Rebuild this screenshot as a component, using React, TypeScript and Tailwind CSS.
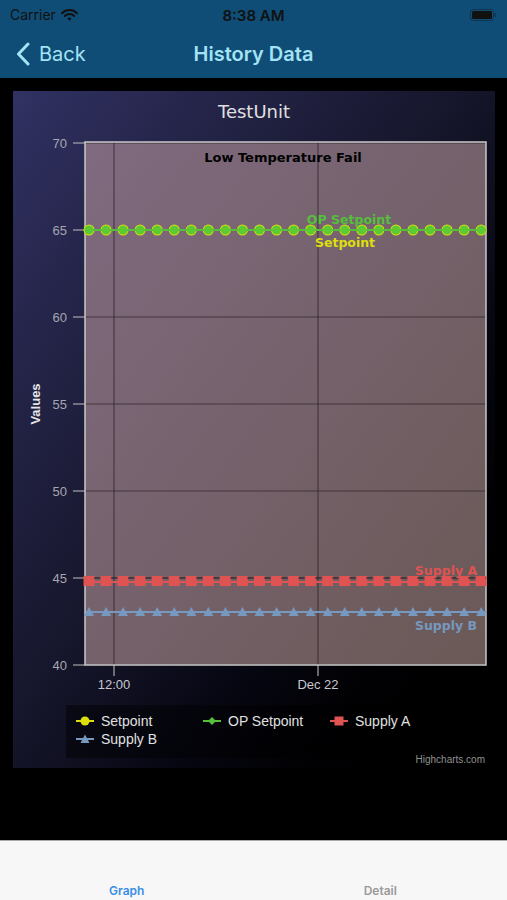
import React from 'react'

const xs = Array.from({ length: 24 }, (_, i) => 89 + i * 17.05)
const yTicks = [
  { v: 70, y: 143 },
  { v: 65, y: 230 },
  { v: 60, y: 317 },
  { v: 55, y: 404 },
  { v: 50, y: 491 },
  { v: 45, y: 578 },
  { v: 40, y: 665 },
]

const wideFont = '"DejaVu Sans", Verdana, sans-serif'

function StatusBar() {
  return (
    <div className="h-[30px] flex items-center justify-between px-[10px] text-[#111] relative">
      <div className="flex items-center gap-[5px]">
        <span className="text-[14px] leading-none">Carrier</span>
        <svg width="17" height="12" viewBox="0 0 17 12">
          <path d="M1 4.2a10.5 10.5 0 0 1 15 0" stroke="#111" strokeWidth="2" fill="none" strokeLinecap="round" />
          <path d="M3.8 7a6.6 6.6 0 0 1 9.4 0" stroke="#111" strokeWidth="2" fill="none" strokeLinecap="round" />
          <path d="M6.4 9.6l2.1 2.1 2.1-2.1a3 3 0 0 0-4.2 0z" fill="#111" />
        </svg>
      </div>
      <span className="absolute left-1/2 -translate-x-1/2 text-[15px] font-semibold leading-none">8:38 AM</span>
      <svg width="27" height="12" viewBox="0 0 27 12">
        <rect x="0.5" y="0.5" width="23" height="11" rx="3" fill="none" stroke="#111" strokeOpacity="0.4" />
        <rect x="2" y="2" width="20" height="8" rx="1.5" fill="#111" />
        <rect x="24.5" y="4" width="1.6" height="4" rx="0.8" fill="#111" fillOpacity="0.4" />
      </svg>
    </div>
  )
}

function NavBar() {
  return (
    <div className="h-[48px] flex items-center relative text-[#a3e3f5]">
      <div className="flex items-center pl-[16px] gap-[9px]">
        <svg width="14" height="24" viewBox="0 0 14 24">
          <path d="M12 2L2.5 12 12 22" stroke="#a3e3f5" strokeWidth="3" fill="none" strokeLinecap="round" strokeLinejoin="round" />
        </svg>
        <span className="text-[20px] leading-none">Back</span>
      </div>
      <span className="absolute left-1/2 -translate-x-1/2 text-[20px] font-semibold leading-none">History Data</span>
    </div>
  )
}

function Plot() {
  const ticks = yTicks.map((t) => (
    <g key={t.v}>
      <line x1="85" x2="486" y1={t.y} y2={t.y} stroke="#2c2428" strokeOpacity="0.7" strokeWidth="1" />
      <line x1="73" x2="85" y1={t.y} y2={t.y} stroke="#c0c0c0" strokeWidth="1" />
      <text x="67" y={t.y + 4.5} textAnchor="end" fontSize="13" fill="#a6a6b0">{t.v}</text>
    </g>
  ))

  return (
    <svg width="482" height="574" viewBox="13 126 482 574" style={{ fontFamily: '"Liberation Sans", Arial, sans-serif' }}>
      <defs>
        <linearGradient id="plotbg" x1="0" y1="0" x2="1" y2="1">
          <stop offset="0" stopColor="#806a80" />
          <stop offset="1" stopColor="#6a5956" />
        </linearGradient>
      </defs>
      <rect x="85" y="142" width="401" height="523" fill="url(#plotbg)" />
      {ticks}
      <line x1="114" x2="114" y1="142" y2="675" stroke="#2c2428" strokeOpacity="0.8" />
      <line x1="318" x2="318" y1="142" y2="675" stroke="#2c2428" strokeOpacity="0.8" />
      <line x1="114" x2="114" y1="665" y2="676" stroke="#c0c0c0" />
      <line x1="318" x2="318" y1="665" y2="676" stroke="#c0c0c0" />
      <rect x="85" y="142" width="401" height="523" fill="none" stroke="#c8c8c8" strokeWidth="1.5" />

      <text x="35" y="404" transform="rotate(-90 35 404)" textAnchor="middle" dominantBaseline="central" fontSize="13" fontWeight="bold" fill="#e6e6e6">Values</text>
      <text x="114" y="689" textAnchor="middle" fontSize="13" fill="#c8c8d0">12:00</text>
      <text x="318" y="689" textAnchor="middle" fontSize="13" fill="#c8c8d0">Dec 22</text>

      <text x="283" y="162" textAnchor="middle" fontSize="13" fontWeight="bold" fill="#000" style={{ fontFamily: wideFont }}>Low Temperature Fail</text>

      {/* Supply B */}
      <line x1="86" x2="486" y1="612" y2="612" stroke="#7798bf" strokeWidth="2" />
      {xs.map((x) => (
        <path key={'b' + x} d={`M${x} 607 L${x + 5} 616 L${x - 5} 616 Z`} fill="#7798bf" />
      ))}

      {/* Supply A */}
      <line x1="86" x2="486" y1="582" y2="582" stroke="#df5353" strokeWidth="2" />
      {xs.map((x) => (
        <rect key={'a' + x} x={x - 5.5} y="576" width="11" height="10" fill="#df5353" />
      ))}
      <line x1="86" x2="486" y1="578" y2="578" stroke="#2c2428" strokeOpacity="0.8" strokeDasharray="6 11" strokeDashoffset="-8" />

      {/* Setpoint + OP Setpoint */}
      <line x1="86" x2="486" y1="230" y2="230" stroke="#dddf0d" strokeWidth="2" />
      {xs.map((x) => (
        <circle key={'s' + x} cx={x} cy="230" r="5.5" fill="#dddf0d" />
      ))}
      <line x1="86" x2="486" y1="230" y2="230" stroke="#55bf3b" strokeWidth="2" />
      {xs.map((x) => (
        <circle key={'o' + x} cx={x} cy="230" r="4.6" fill="#5ccb33" />
      ))}

      <g style={{ fontFamily: wideFont }} fontSize="12.5" fontWeight="bold" textAnchor="middle">
        <text x="349" y="224" fill="#55bf3b">OP Setpoint</text>
        <text x="345" y="247" fill="#dddf0d">Setpoint</text>
        <text x="446" y="575" fill="#df5353">Supply A</text>
        <text x="446" y="630" fill="#7798bf">Supply B</text>
      </g>
    </svg>
  )
}

function LegendSymbol({ kind, color }: { kind: 'circle' | 'diamond' | 'square' | 'triangle'; color: string }) {
  return (
    <svg width="18" height="12" viewBox="0 0 18 12">
      <line x1="0" x2="18" y1="6" y2="6" stroke={color} strokeWidth="2" />
      {kind === 'circle' && <circle cx="9" cy="6" r="4.5" fill={color} />}
      {kind === 'diamond' && <path d="M9 2 L13 6 L9 10 L5 6 Z" fill={color} />}
      {kind === 'square' && <rect x="4.5" y="1.5" width="9" height="9" fill={color} />}
      {kind === 'triangle' && <path d="M9 1.5 L13.5 10 L4.5 10 Z" fill={color} />}
    </svg>
  )
}

const legend = [
  { label: 'Setpoint', kind: 'circle' as const, color: '#dddf0d' },
  { label: 'OP Setpoint', kind: 'diamond' as const, color: '#55bf3b' },
  { label: 'Supply A', kind: 'square' as const, color: '#df5353' },
  { label: 'Supply B', kind: 'triangle' as const, color: '#7798bf' },
]

function Legend() {
  return (
    <div className="ml-[53px] mt-[5px] w-[374px] h-[53px] bg-black/45 pl-[10px] pt-[7px] grid grid-cols-[127px_127px_120px] gap-y-[1px] content-start">
      {legend.map((item) => (
        <div key={item.label} className="flex items-center gap-[7px] h-[17px]">
          <LegendSymbol kind={item.kind} color={item.color} />
          <span className="text-[14px] leading-none text-[#e0e0e0]">{item.label}</span>
        </div>
      ))}
    </div>
  )
}

export default function App() {
  return (
    <div className="w-[507px] h-[900px] bg-black flex flex-col font-['Inter','Liberation_Sans',sans-serif] overflow-hidden">
      <div className="bg-[#0f4d76] shrink-0">
        <StatusBar />
        <NavBar />
      </div>

      <div className="flex-1 bg-black">
        <div className="ml-[13px] mt-[13px] w-[482px] h-[677px] bg-linear-to-br from-[#313163] via-[#141428] to-black flex flex-col font-['Liberation_Sans',Arial,sans-serif]">
          <div className="h-[35px] flex items-end justify-center">
            <span className="text-[18px] leading-none text-[#e0e0e0] mb-[5px] font-['DejaVu_Sans',sans-serif]">TestUnit</span>
          </div>
          <Plot />
          <Legend />
          <div className="flex justify-end pr-[10px] mt-[-3px]">
            <span className="text-[10px] leading-none text-[#909090]">Highcharts.com</span>
          </div>
        </div>
      </div>

      <div className="h-[60px] shrink-0 bg-[#f7f7f7] border-t border-[#a8a8a8] grid grid-cols-2 items-end pb-[3px]">
        <span className="text-center text-[12px] font-semibold text-[#3a8ee6] leading-none">Graph</span>
        <span className="text-center text-[12px] font-semibold text-[#9a9a9a] leading-none">Detail</span>
      </div>
    </div>
  )
}
